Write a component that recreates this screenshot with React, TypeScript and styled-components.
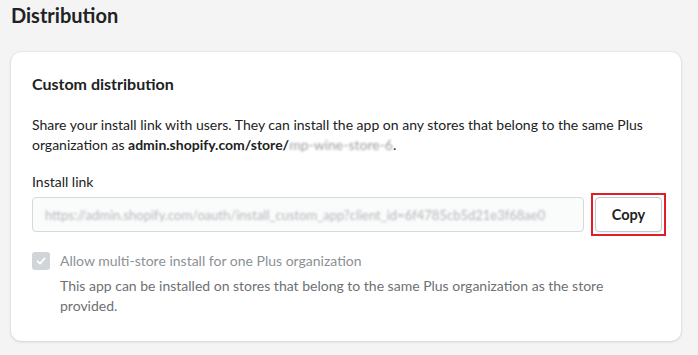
import React from "react";
import styled, { createGlobalStyle } from "styled-components";

const Global = createGlobalStyle`
  html, body { margin: 0; padding: 0; background: #f4f4f4; }
  body { font-family: Lato, "Noto Sans", sans-serif; color: #202223; }
`;

const Page = styled.div`
  width: 698px;
  height: 355px;
  box-sizing: border-box;
  padding: 1px 17px 0 11px;
  overflow: hidden;
`;

const Title = styled.h1`
  margin: 0;
  font-size: 20px;
  font-weight: 700;
  line-height: 28px;
  color: #202223;
`;

const Card = styled.section`
  margin-top: 23px;
  background: #fff;
  border-radius: 10px;
  box-shadow: 0 0 0 1px rgba(63, 63, 68, 0.04), 0 1px 3px rgba(63, 63, 68, 0.15);
  padding: 20px 20px 25px 21px;
  display: flex;
  flex-direction: column;
`;

const CardTitle = styled.h2`
  margin: 0;
  font-size: 16px;
  font-weight: 700;
  line-height: 24px;
`;

const Paragraph = styled.p`
  margin: 19px 0 0;
  font-size: 14px;
  line-height: 20px;
`;

const Strong = styled.strong`
  font-weight: 700;
`;

const Blurred = styled.span<{ $tone?: string }>`
  color: ${(p) => p.$tone || "#8a8d91"};
  filter: blur(1.3px);
`;

const Label = styled.div`
  margin-top: 17px;
  font-size: 14px;
  line-height: 20px;
`;

const FieldRow = styled.div`
  margin-top: 2px;
  display: flex;
  align-items: center;
  gap: 8px;
`;

const Input = styled.div`
  flex: 1;
  height: 35px;
  box-sizing: border-box;
  border: 1px solid #d6d8da;
  border-radius: 4px;
  background: #fafbfb;
  display: flex;
  align-items: center;
  padding: 0 12px;
  overflow: hidden;
  white-space: nowrap;
  font-size: 13px;
`;

const Highlight = styled.div`
  position: relative;
  padding: 3px;
  outline: 2px solid #e11d2a;
  outline-offset: -1px;
  margin-right: -4px;
`;

const Button = styled.button`
  font-family: inherit;
  height: 35px;
  width: 67px;
  box-sizing: border-box;
  background: #fff;
  border: 1px solid #c4c7ca;
  border-radius: 4px;
  box-shadow: 0 1px 0 rgba(0, 0, 0, 0.05);
  font-size: 14.5px;
  font-weight: 700;
  color: #202223;
  cursor: pointer;
  display: flex;
  align-items: center;
  justify-content: center;
`;

const CheckRow = styled.div`
  margin-top: 16px;
  display: flex;
  align-items: center;
  gap: 10px;
`;

const Box = styled.span`
  width: 18px;
  height: 18px;
  border-radius: 3px;
  background: #d2d5d8;
  display: flex;
  align-items: center;
  justify-content: center;
  flex-shrink: 0;
`;

const CheckLabel = styled.span`
  font-size: 14px;
  line-height: 20px;
  color: #8c9196;
`;

const Help = styled.p`
  margin: 5px 0 0 28px;
  font-size: 14px;
  line-height: 20px;
  color: #6d7175;
`;

export default function App() {
  return (
    <>
      <Global />
      <Page>
        <Title>Distribution</Title>
        <Card>
          <CardTitle>Custom distribution</CardTitle>
          <Paragraph>
            Share your install link with users. They can install the app on any stores that belong to the same Plus
            organization as <Strong>admin.shopify.com/store/</Strong>
            <Blurred $tone="#9a9ea3">mp-wine-store-6</Blurred>.
          </Paragraph>
          <Label>Install link</Label>
          <FieldRow>
            <Input>
              <Blurred $tone="#b4b7bb">
                https://admin.shopify.com/oauth/install_custom_app?client_id=6f4785cb5d21e3f68ae0
              </Blurred>
            </Input>
            <Highlight>
              <Button>Copy</Button>
            </Highlight>
          </FieldRow>
          <CheckRow>
            <Box>
              <svg width="12" height="12" viewBox="0 0 12 12" fill="none">
                <path d="M2.5 6.3 L5 8.6 L9.6 3.4" stroke="#fff" strokeWidth="1.8" strokeLinecap="round" strokeLinejoin="round" />
              </svg>
            </Box>
            <CheckLabel>Allow multi-store install for one Plus organization</CheckLabel>
          </CheckRow>
          <Help>
            This app can be installed on stores that belong to the same Plus organization as the store provided.
          </Help>
        </Card>
      </Page>
    </>
  );
}
